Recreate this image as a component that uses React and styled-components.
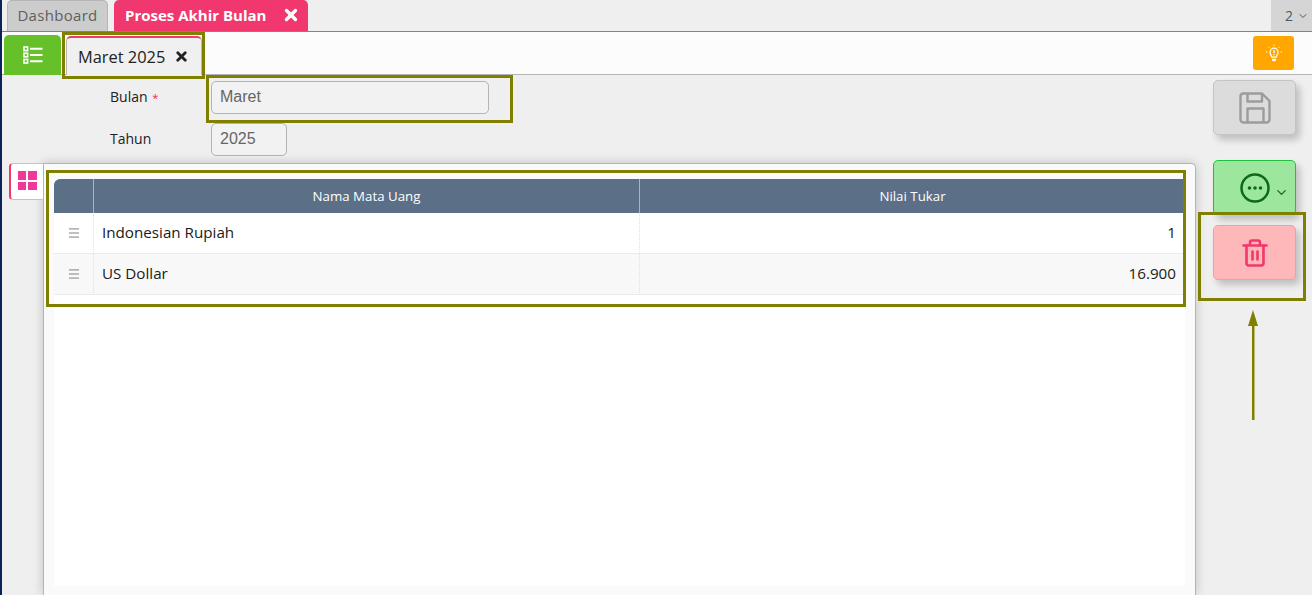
import React from "react";
import styled, { createGlobalStyle } from "styled-components";
import { X, ChevronDown, Menu } from "lucide-react";

const Global = createGlobalStyle`
  html, body { margin: 0; padding: 0; height: 595px; overflow: hidden; background: #efefef; }
  body { font-family: "Open Sans", "Noto Sans", sans-serif; color: #111; }
  #root { height: 595px; }
`;
const Page = styled.div`
  position: relative; width: 1312px; height: 595px; overflow: hidden; box-sizing: border-box;
  border-left: 2px solid #0b2358; background: #efefef; display: flex; flex-direction: column;
`;
const TabBar = styled.div`
  height: 31px; flex: none; display: flex; align-items: flex-end; padding-left: 5px; gap: 6px; background: #efefef; position: relative;
`;
const DashTab = styled.div`
  width: 101px; height: 31px; box-sizing: border-box; background: #cccccc; border: 1px solid #b5b5b5; border-bottom: none; padding-bottom: 3px;
  border-radius: 5px 5px 0 0; color: #5f5f5f; font-size: 15px; letter-spacing: .3px; display: flex; align-items: center; justify-content: center;
`;
const ActiveTab = styled.div`
  width: 194px; height: 31px; box-sizing: border-box; background: #f0386e; color: #fff; border-radius: 5px 5px 0 0;
  font-weight: 700; font-size: 15px; display: flex; align-items: center; justify-content: space-between; padding: 0 8px 2px 11px;
`;
const Count = styled.div`
  position: absolute; right: 0; top: 0; width: 41px; height: 31px; box-sizing: border-box; padding-left: 14px; background: #d5d5d5; color: #555; font-size: 14px;
  display: flex; align-items: center; gap: 4px;
`;
const Toolbar = styled.div`
  height: 44px; flex: none; box-sizing: border-box; background: #fcfcfc; border-top: 1px solid #e0557f; border-bottom: 1px solid #b4b4b4;
  display: flex; align-items: flex-end; padding: 0 18px 0 2px; position: relative;
`;
const ListButton = styled.div`
  width: 57px; height: 40px; margin-bottom: -1px; background: #66c02a; border-radius: 5px 5px 0 0; color: #fff; display: flex; align-items: center; justify-content: center;
`;
const SubTab = styled.div`
  margin: 0 0 -1px 5px; width: 136px; height: 39px; box-sizing: border-box; background: #f0f0f0; border: 1px solid #b8b8b8; border-top: 2px solid #f0386e; border-bottom: none;
  border-radius: 5px 5px 0 0; font-size: 16.4px; color: #222; display: flex; align-items: center; gap: 9px; padding-left: 11px;
`;
const HintButton = styled.div`
  margin-left: auto; align-self: flex-start; margin-top: 4px; width: 41px; height: 34px; border-radius: 3px; background: #ffa600; color: #fff;
  display: flex; align-items: center; justify-content: center;
`;
const Body = styled.div`
  flex: 1; display: flex; min-height: 0; padding-left: 7px;
`;
const Main = styled.div`
  width: 1187px; display: flex; flex-direction: column; flex: none;
`;
const Form = styled.div`
  height: 88px; flex: none; display: grid; grid-template-columns: 101px auto; grid-auto-rows: 32px; row-gap: 10px; padding: 6px 0 0 101px; box-sizing: border-box; align-content: start;
`;
const Label = styled.label`
  font-size: 14px; color: #222; align-self: center; padding-bottom: 2px;
`;
const Star = styled.span`
  color: #e8304a; font-size: 11px; margin-left: 1px;
`;
const Input = styled.div`
  box-sizing: border-box; width: ${p => p.$w}px; height: 33px; border: 1px solid #b4b4b4; border-radius: 5px; background: #f2f2f2; color: #666;
  font-family: "Liberation Sans", Arial, sans-serif; font-size: 16px; display: flex; align-items: center; padding: 0 0 2px 8px;
`;
const PanelRow = styled.div`
  flex: 1; display: flex; min-height: 0; align-items: stretch;
`;
const SideTab = styled.div`
  width: 34px; height: 37px; flex: none; box-sizing: border-box; background: #fff; border: 1px solid #c4c4c4; border-left: 2px solid #f0386e; border-right: none;
  border-radius: 4px 0 0 4px; display: flex; align-items: center; justify-content: center; position: relative; z-index: 1;
`;
const Squares = styled.div`
  display: grid; grid-template-columns: 8.5px 8.5px; grid-auto-rows: 8.5px; gap: 2px; transform: translateY(-1px);
`;
const Square = styled.div`
  background: #f0389a;
`;
const Panel = styled.div`
  width: 1153px; flex: none; box-sizing: border-box; background: #fafafa; border: 1px solid #b4b4b4; border-bottom: none; border-radius: 0 5px 0 0;
  box-shadow: 0 0 11px rgba(0,0,0,.2); padding: 15px 10px 0 10px; height: 432px;
`;
const Sheet = styled.div`
  width: 1131px; height: 407px; background: #fff;
`;
const Grid = styled.div`
  display: grid; grid-template-columns: 39px 546px 546px; grid-template-rows: 34px 41px 41px;
`;
const Head = styled.div`
  background: #5b6f86; color: #fff; font-size: 13.3px; font-weight: 400; display: flex; align-items: center; justify-content: center;
  border-left: ${p => (p.$first ? "none" : "1px solid #aab4c0")}; border-radius: ${p => (p.$first ? "6px 0 0 0" : "0")};
`;
const Cell = styled.div`
  box-sizing: border-box; display: flex; align-items: center; font-size: 15.2px; color: #1a1a1a; padding: 0 9px 2px 8px; border-bottom: 1px solid #ececec; border-left: 1px dotted #e0e0e0;
  background: ${p => (p.$alt ? "#f8f8f8" : "#fff")}; justify-content: ${p => (p.$right ? "flex-end" : "flex-start")};
`;
const Handle = styled(Cell)`
  padding: 0; justify-content: center; color: #808080; border-left: none;
`;
const Actions = styled.div`
  display: flex; flex-direction: column; padding: 5px 0 0 17px; width: 83px; box-sizing: content-box;
`;
const Action = styled.div`
  width: 83px; height: 55px; box-sizing: border-box; border-radius: 5px; display: flex; align-items: center; justify-content: center; margin-top: ${p => p.$mt || 0}px;
  background: ${p => p.$bg}; border: 1px solid ${p => p.$bd}; color: ${p => p.$fg}; box-shadow: 4px 5px 7px rgba(0,0,0,.2);
`;
const MoreAction = styled(Action)`
  justify-content: flex-start; padding-left: 26px;
`;
const Mark = styled.div`
  position: absolute; box-sizing: border-box; border: 3px solid #808000; pointer-events: none;
  left: ${p => p.$x}px; top: ${p => p.$y}px; width: ${p => p.$w}px; height: ${p => p.$h}px;
`;
const Arrow = styled.svg`
  position: absolute; left: 1241px; top: 308px;
`;
const Chevron = styled(ChevronDown)`
  margin: 9px 0 0 4px;
`;

const ListIcon = () => (
  <svg width="20" height="18" viewBox="0 0 20 18" fill="none" stroke="#fff">
    <rect x="1" y="1" width="3.6" height="3.6" strokeWidth="1.6" />
    <rect x="1" y="7.2" width="3.6" height="3.6" strokeWidth="1.6" />
    <rect x="1" y="13.4" width="3.6" height="3.6" strokeWidth="1.6" />
    <path d="M7 2.8H19.5M7 9H19.5M7 15.2H19.5" strokeWidth="2" />
  </svg>
);
const BulbIcon = () => (
  <svg width="18" height="18" viewBox="0 0 18 18" fill="none" stroke="#fff">
    <path d="M6.8 13.2C6.6 11.6 5 10.8 5 8.2a4 4 0 0 1 8 0c0 2.6-1.6 3.4-1.8 5z" strokeWidth="1.3" />
    <path d="M7 14.8h4v1.6l-1 .8H8l-1-.8z" fill="#fff" stroke="none" />
    <path d="M9 6v3.2M9 10.2v1" strokeWidth="1.2" />
    <path d="M9 .6v1.4M3.2 2.8l1 1M14.8 2.8l-1 1M1 8h1.4M15.6 8H17" strokeWidth="1" />
  </svg>
);
const SaveIcon = () => (
  <svg width="32" height="32" viewBox="0 0 32 32" fill="none" stroke="currentColor" strokeWidth="2.4" strokeLinejoin="round">
    <path d="M3.5 1.5h19.5l7.5 7.5v18.5a3 3 0 0 1-3 3H4.500a3 3 0 0 1-3-3V4.500a3 3 0 0 1 2-3z" />
    <path d="M8.500 1.500v8h14.500V1.500M8.500 30.500V16.500h16V30.500" />
  </svg>
);
const MoreIcon = () => (
  <svg width="30" height="30" viewBox="0 0 30 30" fill="none" stroke="currentColor" strokeWidth="2.5">
    <circle cx="15" cy="15" r="13.500" />
    <circle cx="9.500" cy="15" r="1.800" fill="currentColor" stroke="none" />
    <circle cx="15" cy="15" r="1.800" fill="currentColor" stroke="none" />
    <circle cx="20.500" cy="15" r="1.800" fill="currentColor" stroke="none" />
  </svg>
);
const TrashIcon = () => (
  <svg width="26" height="28" viewBox="0 0 26 28" fill="none" stroke="currentColor" strokeWidth="2.6" strokeLinejoin="round" strokeLinecap="round">
    <path d="M1.500 6.500h23" />
    <path d="M8 6V3.500a2 2 0 0 1 2-2h6a2 2 0 0 1 2 2V6" />
    <path d="M4.500 6.500v17.500a2.500 2.500 0 0 0 2.500 2.500h12a2.500 2.500 0 0 0 2.500-2.500V6.500" />
    <path d="M10.500 12.500v8M15.500 12.500v8" />
  </svg>
);

const Row = ({ name, value, alt }) => (
  <>
    <Handle $alt={alt}><Menu size={14} strokeWidth={1.7} /></Handle>
    <Cell $alt={alt}>{name}</Cell>
    <Cell $alt={alt} $right>{value}</Cell>
  </>
);

export default function App() {
  return (
    <Page>
      <Global />
      <TabBar>
        <DashTab>Dashboard</DashTab>
        <ActiveTab>Proses Akhir Bulan <X size={18} strokeWidth={4.5} /></ActiveTab>
        <Count>2 <ChevronDown size={12} /></Count>
      </TabBar>
      <Toolbar>
        <ListButton><ListIcon /></ListButton>
        <SubTab>Maret 2025 <X size={15} strokeWidth={4.5} color="#222" /></SubTab>
        <HintButton><BulbIcon /></HintButton>
      </Toolbar>
      <Body>
        <Main>
          <Form>
            <Label>Bulan <Star>*</Star></Label>
            <Input $w={278}>Maret</Input>
            <Label>Tahun</Label>
            <Input $w={76}>2025</Input>
          </Form>
          <PanelRow>
            <SideTab><Squares><Square /><Square /><Square /><Square /></Squares></SideTab>
            <Panel>
              <Sheet>
                <Grid>
                  <Head $first />
                  <Head>Nama Mata Uang</Head>
                  <Head>Nilai Tukar</Head>
                  <Row name="Indonesian Rupiah" value="1" />
                  <Row name="US Dollar" value="16.900" alt />
                </Grid>
              </Sheet>
            </Panel>
          </PanelRow>
        </Main>
        <Actions>
          <Action $bg="#dcdcdc" $bd="#c4c4c4" $fg="#9c9c9c"><SaveIcon /></Action>
          <MoreAction $mt={25} $bg="#9de69d" $bd="#1fc23c" $fg="#0b6b1a">
            <MoreIcon />
            <Chevron size={15} />
          </MoreAction>
          <Action $mt={10} $bg="#ffb8ba" $bd="#fb9aa0" $fg="#f0386e"><TrashIcon /></Action>
        </Actions>
      </Body>
      <Mark $x={60} $y={32} $w={143} $h={47} />
      <Mark $x={204} $y={75} $w={307} $h={48} />
      <Mark $x={44} $y={170} $w={1140} $h={137} />
      <Mark $x={1196} $y={212} $w={108} $h={89} />
      <Arrow width="22" height="114" viewBox="0 0 22 114">
        <path d="M10 2 L15 18 L5 18 Z" fill="#808000" />
        <rect x="9" y="16" width="2.500" height="96" fill="#808000" />
      </Arrow>
    </Page>
  );
}
